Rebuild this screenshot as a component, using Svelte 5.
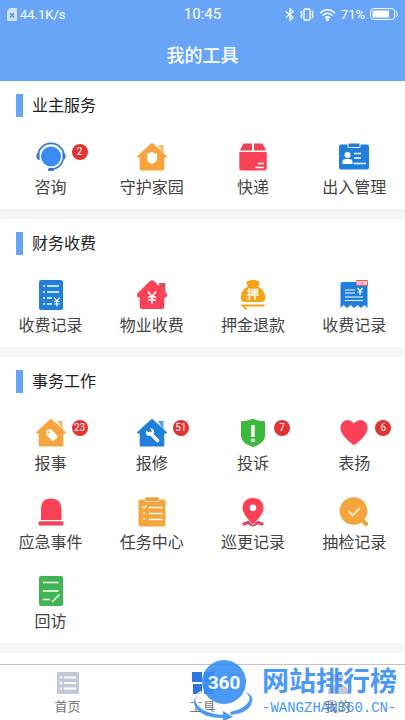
<script lang="ts">
type Tool = { name: string; icon: string; badge?: number };
type Section = { title: string; tools: Tool[] };

const sections: Section[] = [
    {
        title: '业主服务',
        tools: [
            { name: '咨询', icon: 'service', badge: 2 },
            { name: '守护家园', icon: 'guard' },
            { name: '快递', icon: 'parcel' },
            { name: '出入管理', icon: 'pass' }
        ]
    },
    {
        title: '财务收费',
        tools: [
            { name: '收费记录', icon: 'bill' },
            { name: '物业收费', icon: 'fee' },
            { name: '押金退款', icon: 'deposit' },
            { name: '收费记录', icon: 'receipt' }
        ]
    },
    {
        title: '事务工作',
        tools: [
            { name: '报事', icon: 'report', badge: 23 },
            { name: '报修', icon: 'repair', badge: 51 },
            { name: '投诉', icon: 'complaint', badge: 7 },
            { name: '表扬', icon: 'praise', badge: 6 },
            { name: '应急事件', icon: 'alarm' },
            { name: '任务中心', icon: 'task' },
            { name: '巡更记录', icon: 'patrol' },
            { name: '抽检记录', icon: 'inspect' },
            { name: '回访', icon: 'visit' }
        ]
    }
];

const tabs = [
    { id: 'home', name: '首页' },
    { id: 'tools', name: '工具' },
    { id: 'mine', name: '我的' }
];

let active = $state('tools');
</script>

{#snippet house(color: string)}
    <path d="M21 3h5.500v9z" fill={color} opacity="0.75" />
    <path d="M14.200 1.300q.8-.6 1.600 0L29.600 14q.8 1.600-.8 1.600h-1.500v11.600q0 1.300-1.300 1.300H4q-1.300 0-1.300-1.300V15.600H1.200Q-.4 15.600.4 14z" fill={color} />
{/snippet}

{#snippet toolIcon(name: string)}
    <svg class="tool-icon" viewBox="0 0 30 30" aria-hidden="true">
        {#if name === 'service'}
            <circle cx="15" cy="14.500" r="10" fill="#3b89f5" />
            <path d="M2 14a13 12.600 0 0 1 26 0" fill="none" stroke="#3279cf" stroke-width="1.600" />
            <path d="M3.600 10.600v7.600Q.4 17.600.4 14.400t3.200-3.800zM26.400 10.600v7.600q3.200-.6 3.200-3.800t-3.200-3.800z" fill="#3279cf" />
            <path d="M27 18q-2.500 8.500-12 9.600" fill="none" stroke="#3279cf" stroke-width="1.700" />
            <rect x="12" y="26" width="6" height="3" rx="1.500" fill="#3279cf" />
        {:else if name === 'guard'}
            {@render house('#f5a53b')}
            <path d="M15 10l5 1.800v5.200q0 3-5 5-5-2-5-5v-5.200z" fill="#fff" />
        {:else if name === 'parcel'}
            <path d="M5.500 1.500H14v7H1.800zM16 1.500h8.500l3.700 7H16z" fill="#ee4257" />
            <path d="M1.300 10h27.400v16.500q0 2-2 2H3.300q-2 0-2-2z" fill="#fb4155" />
            <path d="M20 21.500h6M17 25.500h9" stroke="#fff" stroke-width="1.300" />
        {:else if name === 'pass'}
            <rect y="2.500" width="30" height="25" rx="2" fill="#1f7fdb" />
            <rect x="9" y="1" width="12" height="4.500" rx="1" fill="#1f7fdb" stroke="#fff" />
            <circle cx="8.500" cy="13" r="3" fill="#fff" />
            <path d="M3.500 22v-2q0-3 3-3h4q3 0 3 3v2z" fill="#fff" />
            <path d="M15 11.500h7M15 16h7M14.500 21.500H27" stroke="#fff" stroke-width="1.300" />
        {:else if name === 'bill'}
            <rect x="3" y="0" width="24" height="30" rx="2.500" fill="#1f7fdb" />
            <path d="M7 6h2M11 6h12M7 12h2M11 12h12M7 18h2M11 18h5M7 24h2M11 24h5" stroke="#fff" stroke-width="1.400" />
            <path d="M18 17.500l2.800 3.500 2.800-3.500M20.800 21v5.500M18 21.500h5.600M18 24h5.600" fill="none" stroke="#fff" stroke-width="1.200" />
        {:else if name === 'fee'}
            <path d="M22 4q0-1 1-1h4.500q1 0 1 1v8L22 7z" fill="#d5535d" />
            <path d="M13.300.8q1.700-1.200 3.400 0l12.800 12.400q1.500 3-1 4.300h-1.200v9q0 2.500-2.500 2.500H5.200q-2.500 0-2.500-2.500v-9H1.500q-2.500-1.300-1-4.300z" fill="#fb4155" />
            <path d="M11 11.500l4 5 4-5M15 16.500v7M11 17h8M11 20h8" fill="none" stroke="#fff" stroke-width="1.600" />
        {:else if name === 'deposit'}
            <path d="M8.500 2.500Q8.500.8 11 .8 13-.3 15-.3t4 1.100q2.500 0 2.500 1.700 0 1.800-1.500 3.700 7.300 4.300 7.300 11.300 0 4.500-4.500 4.500H7.200q-4.500 0-4.500-4.500 0-7 7.300-11.300-1.500-1.900-1.500-3.700z" fill="#f5a416" />
            <path d="M26.500 25.500H4.500L8.500 29.500" fill="none" stroke="#f5a416" stroke-width="1.800" />
            <text class="deposit-mark" x="15" y="19" text-anchor="middle">押</text>
        {:else if name === 'receipt'}
            <path d="M1.500 4q0-2 2-2h25v26l-3-3-3.500 3-3.500-3-3.500 3-3.500-3L8 28l-3.500-3-3 3z" fill="#1f7fdb" />
            <path d="M6 10h10M6 13h10M6 17h18M6 20.500h18" stroke="#fff" stroke-width="1.200" />
            <path d="M18.500 8l2.500 3 2.500-3M21 11v4M18.500 12h5" fill="none" stroke="#fff" stroke-width="1.200" />
            <rect x="17" y="0" width="12" height="6" rx="1" fill="#e9546a" />
            <text class="new-mark" x="23" y="5" text-anchor="middle">NEW</text>
        {:else if name === 'report'}
            {@render house('#f5a53b')}
            <path d="M10.500 13q0-1.500 1.500-1.500h3.500l5.800 6.200q1 1-.2 2L18 22.500q-1.200 1-2.200 0L10.500 17z" fill="#fff" />
            <circle cx="13" cy="14.300" r="1" fill="#f5a53b" />
        {:else if name === 'repair'}
            {@render house('#1f7fdb')}
            <path d="M13.500 15.500l7 7" stroke="#fff" stroke-width="3.600" stroke-linecap="round" />
            <path d="M9 12.500q-1 6 4.500 5.500 4.500-1 3.500-5.500-1-2.500-4-2.500l2 3.200-2 2z" fill="#fff" />
        {:else if name === 'complaint'}
            <path d="M15 .8q5 2.200 12 2.400v15.300Q26 25.500 15 29.200 4 25.500 3 18.500V3.200Q10 3 15 .8z" fill="#3cb93c" />
            <path d="M13.300 7h3.400v12h-3.400zM13.300 20.800h3.400v3h-3.400z" fill="#fff" />
        {:else if name === 'praise'}
            <path d="M15 5.500Q18 2 21.500 2q7 .8 7 8.500 0 6.500-12 15.700-1.500 1-3 0-12-9.200-12-15.700Q1.500 2.800 8.500 2 12 2 15 5.500z" fill="#fb4155" />
        {:else if name === 'alarm'}
            <path d="M5 23V12.500Q5 1.500 15 1.500t10.500 11V23z" fill="#fb4155" />
            <rect x="2.500" y="24.200" width="25" height="4.300" rx="1.500" fill="#ee4257" />
        {:else if name === 'task'}
            <rect x="1.500" y="2.500" width="27" height="27" rx="2.500" fill="#f5a53b" />
            <rect x="8" y="0" width="14" height="4.500" rx="1" fill="#eda339" stroke="#fff" stroke-width=".6" />
            <path d="M12 10.500h13.500M12 16.500h13.500M12 22.500h13.500M6 16h2M6 22h2" stroke="#fff" stroke-width="1.500" />
            <path d="M5.500 9.500l1.500 1.500L9.500 8.500" fill="none" stroke="#fff" stroke-width="1.200" />
        {:else if name === 'patrol'}
            <path d="M6 27l4-1.500 5 2.500 5-2.500 4 1.500" fill="none" stroke="#d9485c" stroke-width="3.200" stroke-linecap="round" />
            <path d="M15 .3q10.500.7 11 11Q25.500 18 15 28 4.500 18 4 11.300q.5-10.300 11-11z" fill="#fb4155" stroke="#fff" stroke-width=".8" />
            <circle cx="15" cy="10.800" r="3.300" fill="#fff" />
        {:else if name === 'inspect'}
            <path d="M23 23l4 4" stroke="#eda339" stroke-width="4" stroke-linecap="round" />
            <circle cx="14.500" cy="14" r="13.800" fill="#f5a53b" />
            <path d="M9.500 14l4 4.500 7.500-7.500" fill="none" stroke="#fff" stroke-width="1.500" />
        {:else if name === 'visit'}
            <rect x="3" y="0" width="24" height="30" rx="2" fill="#40b553" />
            <path d="M7 6.500h15.500M7 15h15.500M7 23.500h7M16 26l7.500-7.500" stroke="#fff" stroke-width="1.500" />
        {/if}
    </svg>
{/snippet}

{#snippet tabIcon(id: string)}
    <svg class="tab-icon" viewBox="0 0 22 22" fill="currentColor" aria-hidden="true">
        {#if id === 'home'}
            <rect width="22" height="22" rx="1" />
            <path d="M3 5.500h2M7 5.500h12M3 11h2M7 11h12M3 16.500h2M7 16.500h12" stroke="#fff" stroke-width="2" />
        {:else if id === 'tools'}
            <path d="M0 0h10v10H0zM12 0h10v10H12zM1 12h9v10H1zM12 12h10v10H12z" />
        {:else}
            <circle cx="11" cy="6" r="5.500" />
            <path d="M1 22v-3q1-6 7-6h6q6 0 7 6v3z" />
        {/if}
    </svg>
{/snippet}

<div class="app">
    <header>
        <div class="status">
            <div class="status-side">
                <svg width="10" height="13" viewBox="0 0 10 13" aria-hidden="true">
                    <path d="M3 0h6q1 0 1 1v11q0 1-1 1H1q-1 0-1-1V3z" fill="#cfe3fb" />
                    <path d="M3 5l4 4.500M7 5L3 9.500" stroke="#5f92d6" stroke-width="1.500" />
                </svg>
                <span>44.1K/s</span>
            </div>
            <time>10:45</time>
            <div class="status-side status-right">
                <svg width="10" height="13" viewBox="0 0 10 13" fill="none" stroke="#fff" stroke-width="1.200" aria-hidden="true">
                    <path d="M1 3.500l7 6L5 12.300V.7l3 2.800-7 6" />
                </svg>
                <svg width="14" height="13" viewBox="0 0 14 13" fill="none" stroke="#fff" stroke-width="1.300" aria-hidden="true">
                    <rect x="4" y="1" width="6" height="11" rx="1" />
                    <path d="M2.200 3L1 4.500l1 2-1 2L2.200 10M11.800 3L13 4.500l-1 2 1 2-1.200 1.500" />
                </svg>
                <svg width="17" height="13" viewBox="0 0 17 13" fill="none" stroke="#fff" stroke-width="1.500" aria-hidden="true">
                    <path d="M1 5q7.500-6.500 15 0M3.500 7.500q5-4.500 10 0M6 10q2.500-2.200 5 0" />
                    <circle cx="8.500" cy="11.500" r=".8" fill="#fff" />
                </svg>
                <span>71%</span>
                <svg width="28" height="12" viewBox="0 0 28 12" aria-hidden="true">
                    <rect x=".6" y=".6" width="24" height="10.800" rx="3" fill="none" stroke="#fff" />
                    <rect x="2.500" y="2.500" width="16.500" height="7" rx="1" fill="#fff" />
                    <path d="M25.500 3q1.800.5 1.800 3t-1.800 3" fill="none" stroke="#fff" />
                </svg>
            </div>
        </div>
        <h1>我的工具</h1>
    </header>

    <main>
        {#each sections as section}
            <section>
                <h2>{section.title}</h2>
                <div class="grid">
                    {#each section.tools as tool}
                        <button class="tool" type="button">
                            {@render toolIcon(tool.icon)}
                            <span>{tool.name}</span>
                            {#if tool.badge}
                                <span class="badge">{tool.badge}</span>
                            {/if}
                        </button>
                    {/each}
                </div>
            </section>
        {/each}
        <section class="rest"></section>
    </main>

    <nav>
        {#each tabs as tab}
            <button
                class="tab"
                class:active={active === tab.id}
                type="button"
                onclick={() => (active = tab.id)}>
                {@render tabIcon(tab.id)}
                <span>{tab.name}</span>
            </button>
        {/each}
        <!-- Site mark over the tab bar -->
        <div class="mark">
            <svg width="60" height="60" viewBox="0 0 60 60" aria-hidden="true">
                <path d="M8 33Q-2 39 4 46q7 9 27 10" fill="none" stroke="#fff" stroke-width="5" />
                <path d="M8 32Q-3 38 4 46q8 8 25 9v-4l10 6-10 4v-3Q9 58 2 48-4 38 8 32z" fill="#368ff5" />
                <path d="M51 32q6 4 4 9-4 8-19 11l1 3q18-2 21-13 2-7-7-10z" fill="#368ff5" />
                <circle cx="30" cy="22" r="22" fill="#368ff5" />
                <text class="mark-number" x="30" y="29" text-anchor="middle">360</text>
            </svg>
            <div class="mark-text">
                <strong>网站排行榜</strong>
                <span>-WANGZHAN360.CN-</span>
            </div>
        </div>
    </nav>
</div>

<style>
    :global(body) {
        margin: 0;
    }

    .app {
        display: flex;
        flex-direction: column;
        height: 100vh;
        background: #fefefe;
        color: #444;
        font-family: Roboto, "Noto Sans CJK SC", sans-serif;
    }

    button {
        padding: 0;
        border: 0;
        background: none;
        color: inherit;
        font: inherit;
        cursor: pointer;
    }

    header {
        flex: none;
        padding-bottom: 10px;
        background: #69a5f7;
        color: #fff;
    }

    .status {
        display: grid;
        grid-template-columns: 1fr auto 1fr;
        align-items: center;
        height: 28px;
        padding: 0 7px;
        font-size: 13px;
    }

    .status time {
        font-size: 15px;
    }

    .status-side {
        display: flex;
        align-items: center;
        gap: 3px;
    }

    .status-right {
        justify-content: flex-end;
        gap: 5px;
    }

    h1 {
        margin: 0;
        padding-top: 13px;
        font-size: 18px;
        font-weight: 500;
        line-height: 30px;
        text-align: center;
    }

    main {
        flex: 1;
        min-height: 0;
        overflow-y: auto;
        scrollbar-width: none;
        background: #f6f6f6;
    }

    section {
        margin-bottom: 10px;
        padding: 13px 0 9px;
        background: #fefefe;
    }

    .rest {
        margin: 0;
        padding: 0;
        height: 11px;
    }

    h2 {
        margin: 0 16px 25px;
        padding-left: 9px;
        border-left: 7px solid #69a5f7;
        color: #222;
        font-size: 16px;
        font-weight: 400;
        line-height: 23px;
    }

    .grid {
        display: grid;
        grid-template-columns: repeat(4, 1fr);
        row-gap: 21px;
    }

    .tool {
        position: relative;
        display: flex;
        flex-direction: column;
        align-items: center;
        gap: 4px;
        font-size: 16px;
        line-height: 24px;
    }

    .tool-icon {
        width: 30px;
        height: 30px;
    }

    .deposit-mark {
        fill: #fff;
        font-size: 12px;
        font-weight: 700;
    }

    .new-mark {
        fill: #fff;
        font-size: 5px;
        font-weight: 700;
    }

    .badge {
        position: absolute;
        top: 2px;
        left: calc(50% + 21px);
        width: 16px;
        border-radius: 8px;
        background: #e23333;
        color: #fff;
        font-size: 10px;
        line-height: 16px;
        text-align: center;
    }

    nav {
        position: relative;
        display: flex;
        flex: none;
        height: 55px;
        border-top: 1px solid #c4c4c4;
        background: #fefefe;
    }

    .tab {
        display: flex;
        flex: 1;
        flex-direction: column;
        align-items: center;
        gap: 3px;
        padding-top: 7px;
        color: #777;
        font-size: 13px;
        line-height: 20px;
    }

    .tab-icon {
        width: 22px;
        height: 22px;
        color: #c3c9da;
    }

    .active .tab-icon {
        color: #2d76e0;
    }

    .mark {
        position: absolute;
        right: 8px;
        bottom: 0;
        display: flex;
        align-items: center;
        gap: 8px;
        color: #368ff5;
        opacity: 0.9;
        pointer-events: none;
    }

    .mark-number {
        fill: #fff;
        font-size: 19px;
        font-weight: 700;
    }

    .mark-text {
        display: flex;
        flex-direction: column;
    }

    .mark-text strong {
        font-size: 27px;
        font-weight: 700;
        line-height: 36px;
    }

    .mark-text span {
        font-family: "Liberation Mono", monospace;
        font-size: 14px;
        line-height: 16px;
    }
</style>
